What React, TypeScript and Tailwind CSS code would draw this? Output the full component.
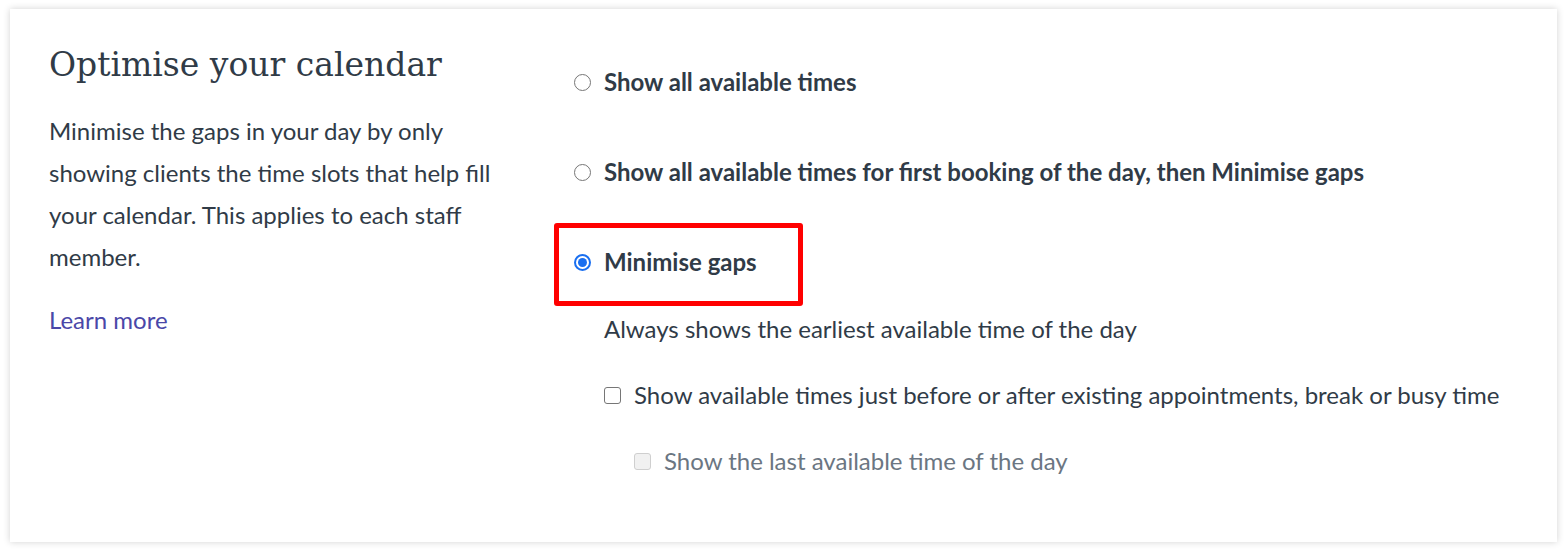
import React from "react";

const textColor = "text-[#303b47]";

function Radio({ checked }: { checked?: boolean }) {
  if (checked) {
    return (
      <span className="w-[17px] h-[17px] rounded-full border-2 border-[#1a6ff0] bg-white flex items-center justify-center shrink-0">
        <span className="w-[9px] h-[9px] rounded-full bg-[#1a6ff0]" />
      </span>
    );
  }
  return <span className="w-[17px] h-[17px] rounded-full border border-[#767676] bg-white shrink-0" />;
}

function Checkbox({ disabled }: { disabled?: boolean }) {
  return disabled ? (
    <span className="w-[17px] h-[17px] rounded-[3px] border border-[#cfcfcf] bg-[#f1f1f1] shrink-0" />
  ) : (
    <span className="w-[17px] h-[17px] rounded-[3px] border border-[#767676] bg-white shrink-0" />
  );
}

export default function App() {
  return (
    <div className="w-[1567px] h-[552px] bg-white pt-[9px] pl-[10px] font-['Lato',sans-serif]">
      <div className="w-[1547px] h-[533px] bg-white shadow-[0_0_7px_rgba(0,0,0,0.18)] flex">
        <div className="w-[564px] pl-[39px] pt-[36px] shrink-0">
          <h1 className={`font-['DejaVu_Serif',serif] text-[33px] leading-[40px] ${textColor}`}>
            Optimise your calendar
          </h1>
          <p className={`mt-[25px] w-[460px] text-[24px] leading-[42px] ${textColor}`}>
            Minimise the gaps in your day by only showing clients the time slots that help fill your calendar. This applies to each staff member.
          </p>
          <a className="block mt-[21px] text-[24px] leading-[42px] text-[#4a47a8]">Learn more</a>
        </div>
        <div className={`flex-1 pt-[58px] ${textColor}`}>
          <div className="flex items-center gap-[13px] h-[30px]">
            <Radio />
            <span className="text-[24px] font-bold leading-[30px]">Show all available times</span>
          </div>
          <div className="flex items-center gap-[13px] h-[30px] mt-[60px]">
            <Radio />
            <span className="text-[24px] font-bold leading-[30px]">
              Show all available times for first booking of the day, then Minimise gaps
            </span>
          </div>
          <div className="relative flex items-center gap-[13px] h-[30px] mt-[60px]">
            <Radio checked />
            <span className="text-[24px] font-bold leading-[30px]">Minimise gaps</span>
            <div className="absolute left-[-20px] top-[-24px] w-[249px] h-[83px] border-[5px] border-[#ff0000] rounded-[3px]" />
          </div>
          <div className="ml-[30px]">
            <p className="mt-[37px] text-[24px] leading-[30px]">Always shows the earliest available time of the day</p>
            <div className="flex items-center gap-[13px] h-[30px] mt-[36px]">
              <Checkbox />
              <span className="text-[24px] leading-[30px]">
                Show available times just before or after existing appointments, break or busy time
              </span>
            </div>
            <div className="flex items-center gap-[13px] h-[30px] mt-[36px] ml-[30px]">
              <Checkbox disabled />
              <span className="text-[24px] leading-[30px] text-[#6b7682]">Show the last available time of the day</span>
            </div>
          </div>
        </div>
      </div>
    </div>
  );
}
